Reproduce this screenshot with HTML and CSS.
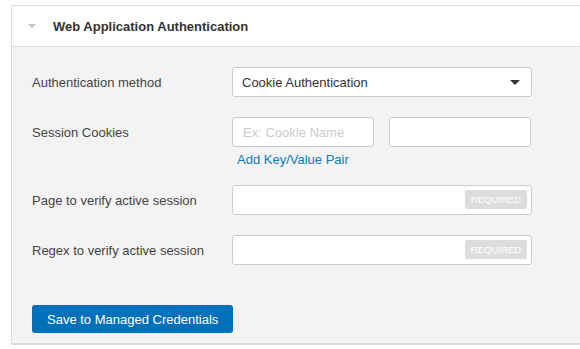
FILE: index.html
```html
<!DOCTYPE html>
<html lang="en">
<head>
  <meta charset="UTF-8">
  <title>Web Application Authentication</title>
  <link rel="stylesheet" href="styles.css">
</head>
<body>

  <div class="panel">
    <div class="panel-head">
      <span class="caret-toggle"></span>
      <h2>Web Application Authentication</h2>
    </div>

    <div class="panel-body">
      <div class="row">
        <label>Authentication method</label>
        <div class="select">
          <span>Cookie Authentication</span>
          <span class="select-caret"></span>
        </div>
      </div>

      <div class="row row-cookies">
        <label>Session Cookies</label>
        <div>
          <div class="pair">
            <input type="text" placeholder="Ex: Cookie Name">
            <input type="text">
          </div>
          <a href="#" class="add-link">Add Key/Value Pair</a>
        </div>
      </div>

      <div class="row">
        <label>Page to verify active session</label>
        <div class="field">
          <input type="text">
          <span class="badge">REQUIRED</span>
        </div>
      </div>

      <div class="row">
        <label>Regex to verify active session</label>
        <div class="field">
          <input type="text">
          <span class="badge">REQUIRED</span>
        </div>
      </div>

      <button class="save-btn">Save to Managed Credentials</button>
    </div>
  </div>

</body>
</html>
```

FILE: styles.css
```css
body {
  margin: 0;
  padding: 5px 0 0 11px;
  font-family: "Liberation Sans", Arial, sans-serif;
  font-size: 13px;
  color: #333;
  background: #fff;
}

.panel {
  border: 1px solid #ddd;
  border-right: none;
  border-bottom-width: 2px;
}

.panel-head {
  display: flex;
  align-items: center;
  height: 40px;
  padding-left: 16px;
  background: #fff;
  border-bottom: 1px dotted #c8c8c8;
}

.caret-toggle {
  width: 0;
  height: 0;
  border-left: 4px solid transparent;
  border-right: 4px solid transparent;
  border-top: 4px solid #c4c4c4;
  margin-right: 17px;
}

.panel-head h2 {
  margin: 0;
  font-size: 13px;
  font-weight: bold;
  color: #333;
}

.panel-body {
  background: #f3f3f3;
  padding: 20px 20px 10px 20px;
}

.row {
  display: grid;
  grid-template-columns: 200px 300px;
  align-items: start;
  margin-bottom: 20px;
}

.row label {
  height: 30px;
  line-height: 32px;
  color: #444;
}

.row-cookies {
  margin-bottom: 16px;
}

.select {
  display: flex;
  align-items: center;
  justify-content: space-between;
  height: 30px;
  box-sizing: border-box;
  padding: 0 11px 0 9px;
  background: #fff;
  border: 1px solid #ccc;
  border-radius: 3px;
  color: #333;
}

.select-caret {
  width: 0;
  height: 0;
  border-left: 5px solid transparent;
  border-right: 5px solid transparent;
  border-top: 5px solid #333;
}

input {
  display: block;
  box-sizing: border-box;
  height: 30px;
  width: 100%;
  padding: 0 10px;
  font-family: inherit;
  font-size: 13px;
  background: #fff;
  border: 1px solid #ccc;
  border-radius: 3px;
  outline: none;
}

input::placeholder {
  color: #ccc;
}

.pair {
  display: flex;
  gap: 15px;
  width: 299px;
}

.pair input {
  width: 142px;
}

.add-link {
  display: inline-block;
  margin: 4px 0 0 5px;
  line-height: 18px;
  color: #0a7bc1;
  text-decoration: none;
}

.field {
  position: relative;
}

.badge {
  position: absolute;
  top: 5px;
  right: 5px;
  height: 19px;
  line-height: 19px;
  padding: 0 6px;
  background: #ddd;
  color: #fff;
  font-size: 9.5px;
  border-radius: 2px;
}

.save-btn {
  display: block;
  margin-top: 40px;
  height: 28px;
  padding: 0 15px;
  white-space: nowrap;
  background: #0070ba;
  color: #fff;
  font-family: inherit;
  font-size: 13px;
  border: none;
  border-radius: 3px;
  cursor: pointer;
}
```
